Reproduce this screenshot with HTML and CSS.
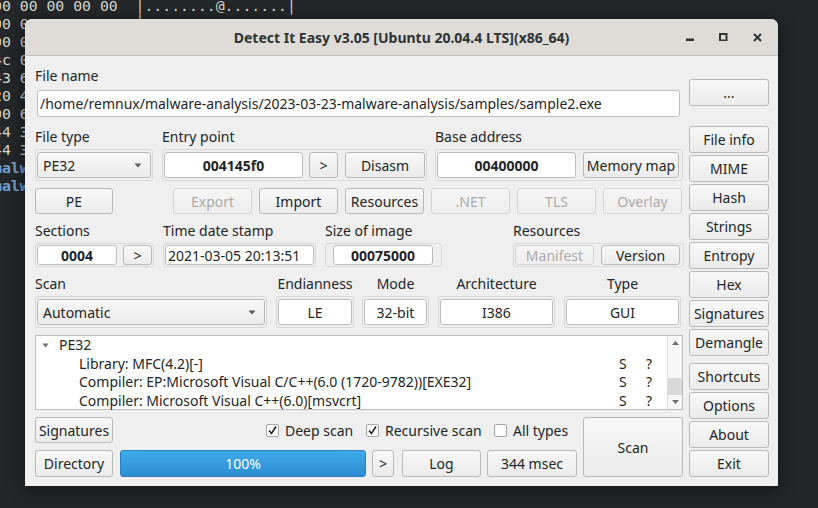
FILE: index.html
```html
<!DOCTYPE html>
<html>
<head>
<meta charset="utf-8">
<link rel="stylesheet" href="styles.css">
</head>
<body>
<div class="terminal">
  <div class="tl">00 00 00 00 00  │........@.......│</div>
  <div class="tl">00 00 00 00 00  │</div>
  <div class="tl">00 0</div>
  <div class="tl">4c 0</div>
  <div class="tl">43 6</div>
  <div class="tl">20 4</div>
  <div class="tl">00 6</div>
  <div class="tl">44 3</div>
  <div class="tl">44 3</div>
  <div class="tl blue">malw</div>
  <div class="tl blue">malw</div>
</div>

<div class="window">
  <div class="titlebar">
    <span class="title">Detect It Easy v3.05 [Ubuntu 20.04.4 LTS](x86_64)</span>
    <div class="controls">
      <svg width="8" height="8" viewBox="0 0 8 8"><rect x="0" y="5.5" width="8" height="2.5" fill="#2e3436"/></svg>
      <svg width="9" height="8" viewBox="0 0 9 8"><rect x="1" y="1" width="6.5" height="6.5" fill="none" stroke="#2e3436" stroke-width="2"/></svg>
      <svg width="9" height="9" viewBox="0 0 9 9"><path d="M1 1 L8 8 M8 1 L1 8" stroke="#2e3436" stroke-width="2" fill="none"/></svg>
    </div>
  </div>
  <div class="body">
    <div class="main">
      <div class="lbl">File name</div>
      <div class="field path">/home/remnux/malware-analysis/2023-03-23-malware-analysis/samples/sample2.exe</div>

      <div class="row r2">
        <div class="grp w118">
          <div class="lbl">File type</div>
          <div class="frame">
            <div class="combo w114"><span>PE32</span><svg class="arrow" width="8" height="5" viewBox="0 0 8 5"><path d="M0.5 0.5 L7.5 0.5 L4 4.5 Z" fill="#5a5d5f"/></svg></div>
          </div>
        </div>
        <div class="grp w265 ml9">
          <div class="lbl">Entry point</div>
          <div class="frame">
            <div class="field b w139">004145f0</div>
            <div class="btn w29 ml6">&gt;</div>
            <div class="btn w80 ml7">Disasm</div>
          </div>
        </div>
        <div class="grp w248 ml8">
          <div class="lbl">Base address</div>
          <div class="frame">
            <div class="field b w139">00400000</div>
            <div class="btn w96 ml7">Memory map</div>
          </div>
        </div>
      </div>

      <div class="row r3">
        <div class="btn w78">PE</div>
        <div class="btns">
          <div class="btn dis">Export</div>
          <div class="btn">Import</div>
          <div class="btn">Resources</div>
          <div class="btn dis">.NET</div>
          <div class="btn dis">TLS</div>
          <div class="btn dis">Overlay</div>
        </div>
      </div>

      <div class="row r4">
        <div class="grp w119">
          <div class="lbl">Sections</div>
          <div class="frame f4">
            <div class="field b w80">0004</div>
            <div class="btn w29 ml6">&gt;</div>
          </div>
        </div>
        <div class="grp w153 ml9">
          <div class="lbl">Time date stamp</div>
          <div class="frame f4">
            <div class="field left w149">2021-03-05 20:13:51</div>
          </div>
        </div>
        <div class="grp w117 ml9">
          <div class="lbl">Size of image</div>
          <div class="frame f4 pad8">
            <div class="field b w100">00075000</div>
          </div>
        </div>
        <div class="grp w171 mlauto">
          <div class="lbl">Resources</div>
          <div class="frame f4">
            <div class="btn dis w79">Manifest</div>
            <div class="btn w79 ml7">Version</div>
          </div>
        </div>
      </div>

      <div class="row r5">
        <div class="grp w232">
          <div class="lbl">Scan</div>
          <div class="frame">
            <div class="combo w228"><span>Automatic</span><svg class="arrow" width="8" height="5" viewBox="0 0 8 5"><path d="M0.5 0.5 L7.5 0.5 L4 4.5 Z" fill="#5a5d5f"/></svg></div>
          </div>
        </div>
        <div class="grp w78 ml9 c">
          <div class="lbl">Endianness</div>
          <div class="frame"><div class="field w74">LE</div></div>
        </div>
        <div class="grp w67 ml8 c">
          <div class="lbl">Mode</div>
          <div class="frame"><div class="field w63">32-bit</div></div>
        </div>
        <div class="grp w117 ml9 c">
          <div class="lbl">Architecture</div>
          <div class="frame"><div class="field w113">I386</div></div>
        </div>
        <div class="grp w117 ml9 c">
          <div class="lbl">Type</div>
          <div class="frame"><div class="field w113">GUI</div></div>
        </div>
      </div>

      <div class="tree">
        <div class="tree-rows">
          <div class="trow top"><svg class="tarrow" width="7" height="5" viewBox="0 0 7 5"><path d="M0.5 0.5 L6.5 0.5 L3.5 4.5 Z" fill="#6a6d70"/></svg><span class="tname">PE32</span></div>
          <div class="trow"><span class="tname child">Library: MFC(4.2)[-]</span><span class="ts">S</span><span class="tq">?</span></div>
          <div class="trow"><span class="tname child">Compiler: EP:Microsoft Visual C/C++(6.0 (1720-9782))[EXE32]</span><span class="ts">S</span><span class="tq">?</span></div>
          <div class="trow"><span class="tname child">Compiler: Microsoft Visual C++(6.0)[msvcrt]</span><span class="ts">S</span><span class="tq">?</span></div>
        </div>
        <div class="sbar">
          <svg class="sarrow" width="15" height="14" viewBox="0 0 15 14"><path d="M4 9 L11 9 L7.5 5 Z" fill="#6a6d70"/></svg>
          <div class="strack"><div class="shandle"></div></div>
          <svg class="sarrow" width="15" height="14" viewBox="0 0 15 14"><path d="M4 5 L11 5 L7.5 9 Z" fill="#6a6d70"/></svg>
        </div>
      </div>

      <div class="bottom">
        <div class="bleft">
          <div class="brow">
            <div class="btn w78">Signatures</div>
            <div class="chk ck1"><span class="box"><svg width="11" height="11" viewBox="0 0 11 11"><path d="M2 5.5 L4.5 8.5 L9 1.5" fill="none" stroke="#232627" stroke-width="1.6"/></svg></span>Deep scan</div>
            <div class="chk ck2"><span class="box"><svg width="11" height="11" viewBox="0 0 11 11"><path d="M2 5.5 L4.5 8.5 L9 1.5" fill="none" stroke="#232627" stroke-width="1.6"/></svg></span>Recursive scan</div>
            <div class="chk"><span class="box"></span>All types</div>
          </div>
          <div class="brow r2b">
            <div class="btn w78">Directory</div>
            <div class="progress">100%</div>
            <div class="btn w22 ml6">&gt;</div>
            <div class="btn w79 ml8">Log</div>
            <div class="btn w90 ml6">344 msec</div>
          </div>
        </div>
        <div class="btn scan">Scan</div>
      </div>
    </div>

    <div class="side">
      <div class="btn dots">...</div>
      <div class="sbtns">
        <div class="btn">File info</div>
        <div class="btn">MIME</div>
        <div class="btn">Hash</div>
        <div class="btn">Strings</div>
        <div class="btn">Entropy</div>
        <div class="btn">Hex</div>
        <div class="btn">Signatures</div>
        <div class="btn">Demangle</div>
      </div>
      <div class="sbtns gap">
        <div class="btn">Shortcuts</div>
        <div class="btn">Options</div>
        <div class="btn">About</div>
        <div class="btn">Exit</div>
      </div>
    </div>
  </div>
</div>
</body>
</html>
```

FILE: styles.css
```css
* { box-sizing: border-box; }
html, body { margin: 0; padding: 0; }
body {
  width: 818px;
  height: 508px;
  overflow: hidden;
  background: #232729;
  position: relative;
  font-family: "Noto Sans", sans-serif;
  font-size: 14px;
  color: #232627;
}

/* terminal behind */
.terminal {
  font-family: "DejaVu Sans Mono", monospace;
  font-size: 14.8px;
  line-height: 18px;
  color: #d3d7cf;
  margin: -3px 0 0 -7px;
}
.terminal .tl { white-space: pre; height: 18px; }
.terminal .blue { color: #729fcf; font-weight: bold; }

/* window */
.window {
  position: absolute;
  left: 25px;
  top: 19px;
  width: 753px;
  height: 467px;
  background: #efefef;
  border-radius: 7px 7px 0 0;
  box-shadow: 0 3px 16px rgba(0, 0, 0, 0.55);
  display: flex;
  flex-direction: column;
}
.titlebar {
  height: 37px;
  flex: none;
  background: #dfdcd8;
  border-bottom: 1px solid #c4c0bb;
  border-radius: 7px 7px 0 0;
  position: relative;
  display: flex;
  align-items: center;
  justify-content: center;
}
.title {
  font-weight: bold;
  font-size: 14px;
  color: #2e3436;
  letter-spacing: 0;
}
.controls {
  position: absolute;
  right: 16px;
  top: 14px;
  display: flex;
  align-items: flex-start;
  gap: 25px;
}
.controls svg { display: block; }

.body {
  flex: 1;
  display: flex;
  padding: 0 9px 9px 10px;
  gap: 6px;
}
.main {
  width: 648px;
  display: flex;
  flex-direction: column;
}
.side {
  width: 80px;
  display: flex;
  flex-direction: column;
}

.lbl {
  height: 20px;
  line-height: 20px;
  white-space: nowrap;
}
.main > .lbl:first-child { margin-top: 10px; }

/* widgets */
.btn {
  display: flex;
  align-items: center;
  justify-content: center;
  height: 26px;
  border: 1px solid #b9b9b9;
  border-radius: 3px;
  background: linear-gradient(#f8f8f8, #ebebeb);
  color: #232627;
  white-space: nowrap;
  flex: none;
}
.btn.dis {
  color: #ababab;
  border-color: #d4d4d4;
  background: linear-gradient(#f5f5f5, #eeeeee);
}
.field {
  background: #fff;
  border: 1px solid #bdbdbd;
  border-radius: 3px;
  display: flex;
  align-items: center;
  justify-content: center;
  height: 26px;
  white-space: nowrap;
  flex: none;
}
.field.b { font-weight: bold; }
.field.left { justify-content: flex-start; padding-left: 2px; }
.field.path {
  justify-content: flex-start;
  padding-left: 2px;
  margin: 4px 3px 0 2px;
  height: 27px;
}
.combo {
  display: flex;
  align-items: center;
  justify-content: space-between;
  height: 26px;
  padding: 0 8px 0 5px;
  border: 1px solid #b9b9b9;
  border-radius: 3px;
  background: linear-gradient(#f8f8f8, #ebebeb);
  flex: none;
}
.combo .arrow { display: block; }

.frame {
  border: 1px solid #d9d9d9;
  border-radius: 3px;
  padding: 2px 1px;
  display: flex;
  align-items: center;
  margin-top: 2px;
}
.frame.f4 { padding: 1px; }
.frame.f4 .field, .frame.f4 .btn { height: 20px; }
.frame.pad8 { padding: 1px 7px; }

.row { display: flex; }
.r2 { margin-top: 10px; }
.r3 { margin-top: 7px; }
.r4 { margin-top: 7px; }
.r5 { margin-top: 7px; }
.grp { display: flex; flex-direction: column; flex: none; }
.grp.c .lbl { text-align: center; }

.btns { display: flex; gap: 7px; margin-left: 60px; }
.btns .btn { width: 79px; }

/* widths */
.w22 { width: 22px; } .w29 { width: 29px; } .w63 { width: 63px; } .w67 { width: 67px; }
.w74 { width: 74px; } .w78 { width: 78px; } .w79 { width: 79px; } .w80 { width: 80px; }
.w90 { width: 90px; } .w96 { width: 96px; } .w100 { width: 100px; } .w113 { width: 113px; }
.w114 { width: 114px; } .w117 { width: 117px; } .w118 { width: 118px; } .w119 { width: 119px; }
.w139 { width: 139px; } .w149 { width: 149px; } .w153 { width: 153px; } .w171 { width: 171px; }
.w228 { width: 228px; } .w232 { width: 232px; } .w248 { width: 248px; } .w265 { width: 265px; }
.ml6 { margin-left: 6px; } .ml7 { margin-left: 7px; } .ml8 { margin-left: 8px; } .ml9 { margin-left: 9px; }
.mlauto { margin-left: auto; margin-right: 0; }
.r4 .mlauto { margin-right: -1px; }

/* tree */
.tree {
  margin-top: 7px;
  height: 75px;
  background: #fff;
  border: 1px solid #bdbdbd;
  display: flex;
}
.tree-rows { flex: 1; }
.trow {
  height: 18.6px;
  line-height: 18.6px;
  display: flex;
  align-items: center;
  white-space: nowrap;
  position: relative;
}
.tarrow { margin-left: 6px; margin-right: 10px; display: block; }
.tname.child { margin-left: 43px; }
.ts { position: absolute; left: 583px; }
.tq { position: absolute; left: 610px; }
.sbar {
  width: 15px;
  border-left: 1px solid #dedede;
  display: flex;
  flex-direction: column;
  background: #f7f7f7;
}
.sarrow { display: block; flex: none; }
.strack { flex: 1; position: relative; }
.shandle {
  position: absolute;
  left: 0; right: 0;
  top: 28px;
  bottom: 0;
  background: #d9d9d9;
}

/* bottom */
.bottom {
  margin-top: 7px;
  height: 60px;
  display: flex;
  gap: 6px;
}
.bleft { width: 542px; display: flex; flex-direction: column; }
.brow { display: flex; align-items: center; height: 26px; }
.brow.r2b { margin-top: 7px; height: 27px; }
.brow.r2b .btn { height: 27px; }
.chk { display: flex; align-items: center; white-space: nowrap; }
.chk .box {
  width: 13px;
  height: 13px;
  background: #fff;
  border: 1px solid #a5a5a5;
  border-radius: 2px;
  margin-right: 6px;
  display: flex;
  align-items: center;
  justify-content: center;
}
.chk .box svg { display: block; }
.ck1 { margin-left: 153px; width: 100px; }
.ck2 { width: 128px; }
.progress {
  margin-left: 7px;
  width: 246px;
  height: 27px;
  border: 1px solid #2b7fc0;
  border-radius: 3px;
  background: linear-gradient(#3eabea, #2e8cd1);
  color: #fff;
  display: flex;
  align-items: center;
  justify-content: center;
}
.btn.scan { width: 100px; height: 60px; }

/* side */
.btn.dots { margin-top: 23px; height: 27px; }
.sbtns { display: flex; flex-direction: column; gap: 2px; margin-top: 20px; }
.sbtns.gap { margin-top: 7px; }
.sbtns .btn { height: 27px; }
```
